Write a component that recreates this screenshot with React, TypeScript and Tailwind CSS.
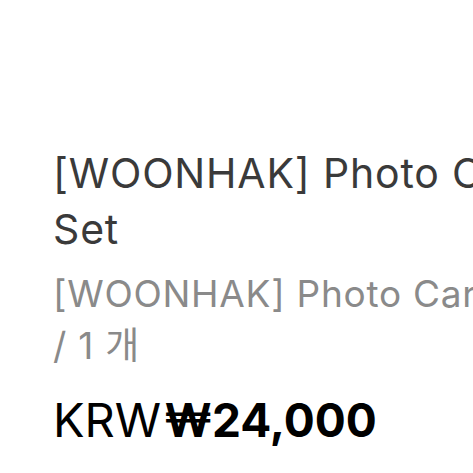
export default function App() {
  return (
    <div className="h-[473px] w-[473px] overflow-hidden bg-white" style={{ fontFamily: 'Inter, "Noto Sans CJK KR", sans-serif' }}>
      <div className="w-[575px] pl-[53px] pt-[145px]">
        <p className="text-[41px] leading-[56px] tracking-[0.02em] text-[#3a3a3a]">
          [WOONHAK] Photo Card Set
        </p>
        <p className="mt-[11px] text-[37px] leading-[52px] tracking-[0.02em] text-[#8a8a8a]">
          [WOONHAK] Photo Card Set / 1 개
        </p>
        <p className="mt-[20px] flex items-baseline gap-[3px] text-[47px] leading-[56px] text-black">
          <span>KRW</span>
          <span className="text-[46px] font-bold">₩24,000</span>
        </p>
      </div>
    </div>
  )
}
